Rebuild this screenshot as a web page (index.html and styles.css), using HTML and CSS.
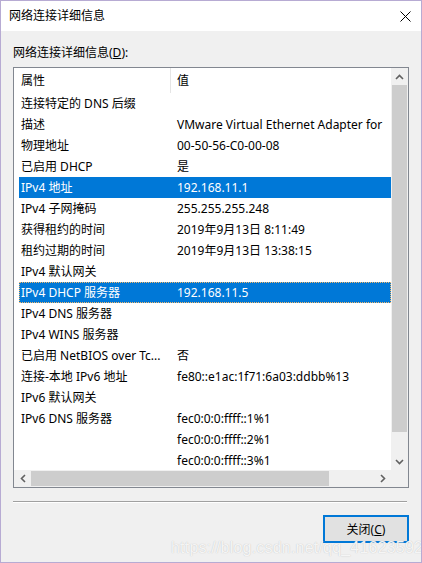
FILE: index.html
```html
<!DOCTYPE html>
<html lang="zh-CN">
<head>
  <meta charset="UTF-8">
  <title>网络连接详细信息</title>
  <link rel="stylesheet" href="styles.css">
</head>
<body>

<div class="window">
  <div class="titlebar">
    <span class="title">网络连接详细信息</span>
    <svg class="close" width="11" height="11" viewBox="0 0 11 11">
      <path d="M0.5 0.5 L10.5 10.5 M10.5 0.5 L0.5 10.5" stroke="#000" stroke-width="1" fill="none"/>
    </svg>
  </div>

  <div class="client">
    <div class="caption">网络连接详细信息(<u>D</u>):</div>

    <div class="listbox">
      <div class="content">
        <div class="header">
          <div class="c1">属性</div>
          <div class="c2">值</div>
        </div>
        <div class="row"><div class="c1">连接特定的 DNS 后缀</div><div class="c2"></div></div>
        <div class="row"><div class="c1">描述</div><div class="c2">VMware Virtual Ethernet Adapter for</div></div>
        <div class="row"><div class="c1">物理地址</div><div class="c2">00-50-56-C0-00-08</div></div>
        <div class="row"><div class="c1">已启用 DHCP</div><div class="c2">是</div></div>
        <div class="row sel"><div class="c1">IPv4 地址</div><div class="c2">192.168.11.1</div></div>
        <div class="row"><div class="c1">IPv4 子网掩码</div><div class="c2">255.255.255.248</div></div>
        <div class="row"><div class="c1">获得租约的时间</div><div class="c2">2019年9月13日 8:11:49</div></div>
        <div class="row"><div class="c1">租约过期的时间</div><div class="c2">2019年9月13日 13:38:15</div></div>
        <div class="row"><div class="c1">IPv4 默认网关</div><div class="c2"></div></div>
        <div class="row sel focus"><div class="c1">IPv4 DHCP 服务器</div><div class="c2">192.168.11.5</div></div>
        <div class="row"><div class="c1">IPv4 DNS 服务器</div><div class="c2"></div></div>
        <div class="row"><div class="c1">IPv4 WINS 服务器</div><div class="c2"></div></div>
        <div class="row"><div class="c1">已启用 NetBIOS over Tc...</div><div class="c2">否</div></div>
        <div class="row"><div class="c1">连接-本地 IPv6 地址</div><div class="c2">fe80::e1ac:1f71:6a03:ddbb%13</div></div>
        <div class="row"><div class="c1">IPv6 默认网关</div><div class="c2"></div></div>
        <div class="row"><div class="c1">IPv6 DNS 服务器</div><div class="c2">fec0:0:0:ffff::1%1</div></div>
        <div class="row"><div class="c1"></div><div class="c2">fec0:0:0:ffff::2%1</div></div>
        <div class="row"><div class="c1"></div><div class="c2">fec0:0:0:ffff::3%1</div></div>
      </div>

      <div class="vscroll">
        <div class="arrow">
          <svg width="9" height="6" viewBox="0 0 9 6"><path d="M1 5 L4.5 1.5 L8 5" stroke="#606060" stroke-width="1.6" fill="none"/></svg>
        </div>
        <div class="vthumb"></div>
        <div class="vtrack"></div>
        <div class="arrow">
          <svg width="9" height="6" viewBox="0 0 9 6"><path d="M1 1 L4.5 4.5 L8 1" stroke="#606060" stroke-width="1.6" fill="none"/></svg>
        </div>
      </div>

      <div class="hscroll">
        <div class="arrow">
          <svg width="6" height="9" viewBox="0 0 6 9"><path d="M5 1 L1.5 4.5 L5 8" stroke="#606060" stroke-width="1.6" fill="none"/></svg>
        </div>
        <div class="hthumb"></div>
        <div class="htrack"></div>
        <div class="arrow">
          <svg width="6" height="9" viewBox="0 0 6 9"><path d="M1 1 L4.5 4.5 L1 8" stroke="#606060" stroke-width="1.6" fill="none"/></svg>
        </div>
      </div>

      <div class="corner"></div>
    </div>

    <div class="separator"></div>

    <div class="buttons">
      <button class="btn">关闭(<u>C</u>)</button>
    </div>

    <div class="watermark">https://blog.csdn.net/qq_41623592</div>
  </div>
</div>

</body>
</html>
```

FILE: styles.css
```css
* { box-sizing: border-box; }
body { margin: 0; font-family: "Noto Sans", "Noto Sans CJK SC", sans-serif; font-size: 12px; color: #000; }

.window { width: 422px; height: 563px; border: 1px solid #b7abd3; background: #f0f0f0; display: flex; flex-direction: column; overflow: hidden; }

.titlebar { height: 30px; background: #fff; display: flex; align-items: center; justify-content: space-between; padding: 0 10px 0 8px; }
.title { line-height: 16px; }
.close { display: block; margin-top: 1px; }

.client { position: relative; flex: 1; padding: 14px 12px 0 12px; }
.caption { line-height: 16px; height: 22px; }

.listbox { width: 396px; height: 421px; border: 1px solid #828790; background: #fff; display: grid; grid-template-columns: 377px 17px; grid-template-rows: 402px 17px; }

.content { overflow: hidden; }
.header { height: 25px; display: flex; align-items: stretch; padding-left: 5px; line-height: 25px; }
.header .c1 { border-right: 1px solid #e5e5e5; }
.row { height: 21px; display: flex; align-items: center; margin-left: 5px; line-height: 21px; white-space: nowrap; }
.c1 { width: 152px; padding-left: 2px; flex: none; overflow: hidden; white-space: nowrap; }
.c2 { padding-left: 6px; white-space: nowrap; }
.sel { background: #0078d7; color: #fff; }
.focus { outline: 1px dotted #f3b86b; outline-offset: -1px; }

.vscroll { background: #f0f0f0; display: flex; flex-direction: column; }
.vscroll .arrow { height: 17px; display: flex; align-items: center; justify-content: center; flex: none; }
.vthumb { height: 347px; margin: 0 1px; background: #cdcdcd; }
.vtrack { flex: 1; }

.hscroll { background: #f0f0f0; display: flex; }
.hscroll .arrow { width: 17px; display: flex; align-items: center; justify-content: center; flex: none; }
.hthumb { width: 298px; margin: 1px 0; background: #cdcdcd; }
.htrack { flex: 1; }

.corner { background: #f0f0f0; }

.separator { width: 394px; margin-top: 13px; border-top: 1px solid #a0a0a0; border-bottom: 1px solid #fff; }

.buttons { display: flex; justify-content: flex-end; padding-top: 12px; }
.btn { width: 86px; height: 28px; border: 2px solid #0078d7; background: #e1e1e1; font-family: "Noto Sans", "Noto Sans CJK SC", sans-serif; font-size: 12px; color: #000; padding: 0; }

.watermark { position: absolute; left: 170px; top: 508px; font-family: "Liberation Sans", sans-serif; font-size: 16px; line-height: 18px; letter-spacing: 0.2px; color: rgba(255,255,255,0.85); text-shadow: 0 0 1px #b8b8b8; white-space: nowrap; }
```
